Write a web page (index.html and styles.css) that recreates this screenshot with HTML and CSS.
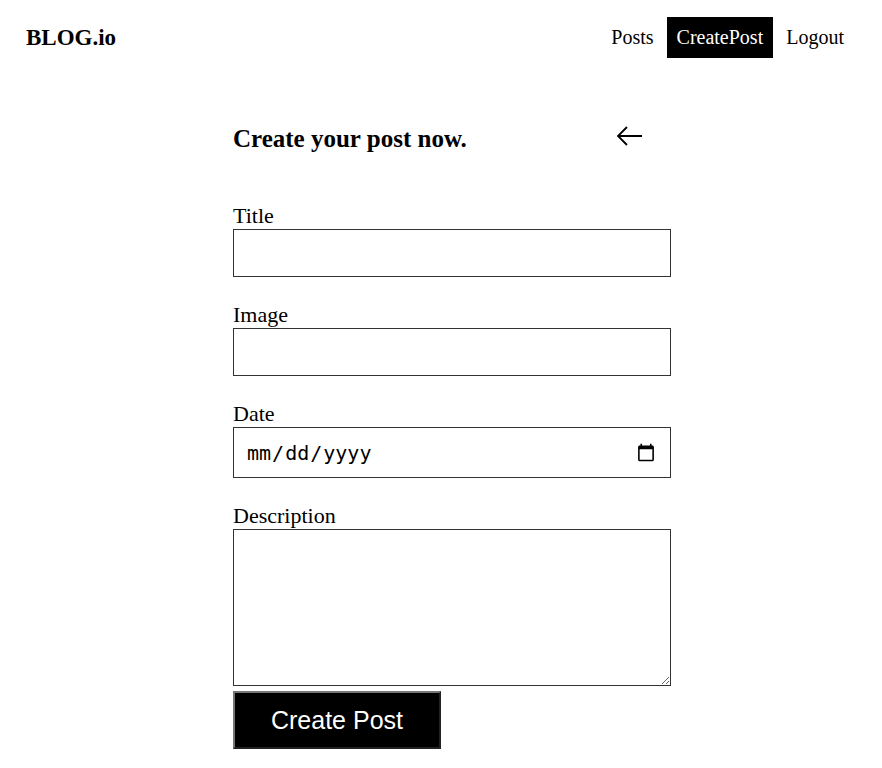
FILE: index.html
```html
<!DOCTYPE html>
<html>
<head>
<meta charset="utf-8">
<link rel="stylesheet" href="styles.css">
</head>
<body>
<header class="topbar">
  <div class="brand">BLOG.io</div>
  <nav class="nav">
    <a class="nav-link">Posts</a>
    <a class="nav-link active">CreatePost</a>
    <a class="nav-link">Logout</a>
  </nav>
</header>
<main class="wrap">
  <div class="head-row">
    <h2 class="heading">Create your post now.</h2>
    <svg class="back" width="28" height="22" viewBox="0 0 28 22"><path d="M27 11H3M12 2L3 11l9 9" fill="none" stroke="#000" stroke-width="1.8"/></svg>
  </div>
  <form class="form">
    <label class="label">Title</label>
    <input class="field" type="text">
    <label class="label">Image</label>
    <input class="field" type="text">
    <label class="label">Date</label>
    <input class="field date" type="date">
    <label class="label">Description</label>
    <textarea class="field area"></textarea>
    <button class="submit" type="button">Create Post</button>
  </form>
</main>
</body>
</html>
```

FILE: styles.css
```css
html, body { margin: 0; padding: 0; background: #fff; }
body { font-family: "Liberation Serif", "Times New Roman", serif; color: #000; }
.topbar { display: flex; justify-content: space-between; align-items: center; padding: 17px 38px 0 26px; height: 41px; }
.brand { font-weight: bold; font-size: 23px; }
.nav { display: flex; gap: 13px; align-items: center; }
.nav-link { font-size: 20px; padding: 9px 0; line-height: 23px; color: #000; }
.nav-link.active { background: #000; color: #fff; padding: 9px 10px; }
.wrap { width: 438px; margin: 0 0 0 233px; padding-top: 59px; }
.head-row { display: flex; align-items: center; height: 44px; }
.heading { font-size: 25px; font-weight: bold; margin: 0; flex: 1; }
.back { margin-right: 28px; margin-top: -7px; }
.form { display: flex; flex-direction: column; margin-top: 41px; }
.label { font-size: 22px; line-height: 27px; display: block; margin-top: 24px; }
.label:first-child { margin-top: 0; }
.field { box-sizing: border-box; width: 438px; height: 48px; border: 1px solid #333; margin: 0; padding: 0 12px; font-size: 20px; background: #fff; }
.date { height: 51px; font-family: "DejaVu Sans Mono", monospace; font-size: 20px; }
.area { height: 157px; resize: vertical; }
.submit { align-self: flex-start; margin-top: 5px; width: 208px; height: 58px; background: #000; color: #fff; font-family: "Liberation Sans", Arial, sans-serif; font-size: 25px; border: 2px outset #777; padding: 0; }
```
